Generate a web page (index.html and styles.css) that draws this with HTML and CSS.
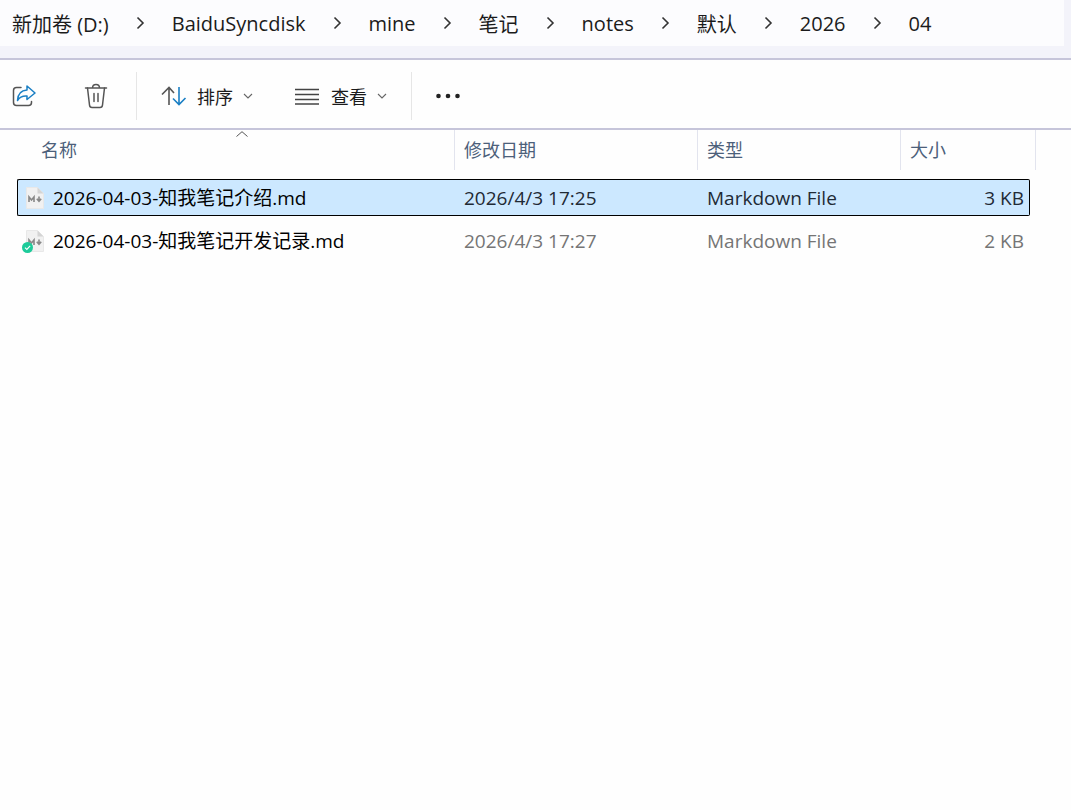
FILE: index.html
```
<!DOCTYPE html>
<html lang="zh-CN">
<head>
    <meta charset="UTF-8">
    <meta name="viewport" content="width=device-width, initial-scale=1.0">
    <title>04</title>
    <link rel="stylesheet" href="styles.css">
</head>
<body>
    <svg class="defs" aria-hidden="true">
        <symbol id="crumb-arrow" viewBox="0 0 9 14">
            <path d="M1.5 1.5 L7 7 L1.5 12.5" fill="none" stroke="#333" stroke-width="1.6"/>
        </symbol>
        <symbol id="down" viewBox="0 0 10 6">
            <path d="M1 1 L5 5 L9 1" fill="none" stroke="#666" stroke-width="1.1"/>
        </symbol>
        <symbol id="md-file" viewBox="0 0 18 22">
            <path d="M0.5 0.5 H11.5 L17.5 6.5 V21.5 H0.5 Z" fill="#f1f1f1" stroke="#e8e8e8"/>
            <path d="M11.5 0.5 V6.5 H17.5 Z" fill="#d4d4d4"/>
            <path d="M3 15 V10 L5.5 13 L8 10 V15" fill="none" stroke="#888" stroke-width="1.6"/>
            <path d="M13 9.5 V14 M10.8 11.8 L13 14.3 L15.2 11.8" fill="none" stroke="#888" stroke-width="1.6"/>
        </symbol>
    </svg>

    <header class="address">
        <nav class="crumbs" aria-label="路径">
            <a href="#">新加卷 (D:)</a>
            <svg><use href="#crumb-arrow"/></svg>
            <a href="#">BaiduSyncdisk</a>
            <svg><use href="#crumb-arrow"/></svg>
            <a href="#">mine</a>
            <svg><use href="#crumb-arrow"/></svg>
            <a href="#">笔记</a>
            <svg><use href="#crumb-arrow"/></svg>
            <a href="#">notes</a>
            <svg><use href="#crumb-arrow"/></svg>
            <a href="#">默认</a>
            <svg><use href="#crumb-arrow"/></svg>
            <a href="#">2026</a>
            <svg><use href="#crumb-arrow"/></svg>
            <a href="#">04</a>
        </nav>
    </header>

    <div class="toolbar">
        <div class="group group-file">
            <button aria-label="共享">
                <svg width="24" height="24" viewBox="0 0 24 24" fill="none" stroke-width="1.5" stroke-linejoin="round" stroke-linecap="round">
                    <path d="M9 3.5 H4.5 Q1.5 3.5 1.5 6.5 V18.5 Q1.5 21.5 4.5 21.5 H16.5 Q19.5 21.5 19.5 18.5 V17.5" stroke="#555"/>
                    <path d="M15 2 L23 9 L15 15.5 V12 Q8.5 11.5 5.5 16.5 Q6 6.5 15 6 Z" stroke="#1a7fc4"/>
                </svg>
            </button>
            <button aria-label="删除">
                <svg width="24" height="26" viewBox="0 0 24 26" fill="none" stroke="#555" stroke-width="1.5" stroke-linejoin="round" stroke-linecap="round">
                    <path d="M1.5 5 H22.5 M8.5 5 Q8.5 1.5 12 1.5 Q15.5 1.5 15.5 5"/>
                    <path d="M3.5 5 L5.5 22 Q5.7 24.5 8 24.5 H16 Q18.3 24.5 18.5 22 L20.5 5"/>
                    <path d="M10 10.5 V18.5 M14 10.5 V18.5"/>
                </svg>
            </button>
        </div>
        <div class="group group-view">
            <button>
                <svg width="26" height="20" viewBox="0 0 26 20" fill="none" stroke-width="1.6">
                    <path d="M8 19 V1.5 M1 8.5 L8 1.5 L13 7" stroke="#555"/>
                    <path d="M18 1 V18.5 M12 12.5 L18 18.5 L24.5 12" stroke="#1a7fc4"/>
                </svg>
                排序
                <svg class="down"><use href="#down"/></svg>
            </button>
            <button>
                <svg width="26" height="17" viewBox="0 0 26 17" stroke="#444" stroke-width="1.3">
                    <path d="M0 1.5 H24 M0 6.5 H24 M0 11.5 H24 M0 16 H24"/>
                </svg>
                查看
                <svg class="down"><use href="#down"/></svg>
            </button>
        </div>
        <div class="group group-more">
            <button aria-label="更多">
                <svg width="24" height="6" viewBox="0 0 24 6" fill="#222">
                    <circle cx="2.5" cy="3" r="2.3"/>
                    <circle cx="12" cy="3" r="2.3"/>
                    <circle cx="21.5" cy="3" r="2.3"/>
                </svg>
            </button>
        </div>
    </div>

    <main class="files">
        <table>
            <colgroup>
                <col>
                <col class="col-date">
                <col class="col-type">
                <col class="col-size">
                <col class="col-edge">
            </colgroup>
            <thead>
                <tr>
                    <th class="name" aria-sort="ascending">
                        名称
                        <svg class="sorted" viewBox="0 0 12 6"><path d="M0.5 5.5 L6 0.7 L11.5 5.5" fill="none" stroke="#555"/></svg>
                    </th>
                    <th>修改日期</th>
                    <th>类型</th>
                    <th colspan="2">大小</th>
                </tr>
            </thead>
            <tbody>
                <tr class="selected">
                    <td class="name">
                        <div class="file">
                            <span class="icon"><svg><use href="#md-file"/></svg></span>
                            2026-04-03-知我笔记介绍.md
                        </div>
                    </td>
                    <td>2026/4/3 17:25</td>
                    <td>Markdown File</td>
                    <td class="size">3 KB</td>
                </tr>
                <tr>
                    <td class="name">
                        <div class="file">
                            <span class="icon">
                                <svg><use href="#md-file"/></svg>
                                <svg class="synced" viewBox="0 0 10 10"><circle cx="5" cy="5" r="5" fill="#1dcb9a"/><path d="M2.7 5.2 L4.4 6.8 L7.4 3.6" fill="none" stroke="#fff"/></svg>
                            </span>
                            2026-04-03-知我笔记开发记录.md
                        </div>
                    </td>
                    <td>2026/4/3 17:27</td>
                    <td>Markdown File</td>
                    <td class="size">2 KB</td>
                </tr>
            </tbody>
        </table>
    </main>
</body>
</html>
```
FILE: styles.css
```
* {
    box-sizing: border-box;
}
body {
    margin: 0;
    background: #fefefe;
    color: #1b1b1b;
    font-family: "Open Sans", "Noto Sans CJK SC", sans-serif;
}
svg {
    display: block;
    flex: none;
}
.defs {
    display: none;
}

/* address bar */
.address {
    background: #f3f3fa;
    border-bottom: 2px solid #c6c5da;
    padding: 0 7px 12px 0;
}
.crumbs {
    display: flex;
    align-items: center;
    gap: 27px;
    height: 46px;
    padding-left: 12px;
    background: #fcfcfe;
    font-size: 20px;
    white-space: nowrap;
}
.crumbs a {
    color: inherit;
    text-decoration: none;
}
.crumbs svg {
    width: 9px;
    height: 14px;
}

/* toolbar */
.toolbar {
    display: flex;
    align-items: center;
    height: 70px;
    padding-top: 4px;
    border-bottom: 2px solid #c6c5da;
}
.group {
    display: flex;
    align-items: center;
    height: 48px;
    padding: 0 24px;
}
.group + .group {
    border-left: 1px solid #e6e6e6;
}
.group-file {
    gap: 48px;
    padding: 0 28px 0 12px;
}
.group-view {
    gap: 42px;
}
button {
    display: flex;
    align-items: center;
    gap: 10px;
    padding: 0;
    border: 0;
    background: none;
    color: #1b1b1b;
    font-family: inherit;
    font-size: 18px;
    cursor: pointer;
}
.down {
    width: 10px;
    height: 6px;
}

/* file list */
.files {
    padding: 0 35px 0 17px;
}
table {
    width: 100%;
    margin-top: -6px;
    border-spacing: 0 6px;
    table-layout: fixed;
    font-size: 19px;
    line-height: 24px;
}
.col-date {
    width: 243px;
}
.col-type {
    width: 203px;
}
.col-size {
    width: 129px;
}
.col-edge {
    width: 6px;
}
th {
    position: relative;
    height: 43px;
    padding: 0 9px 3px;
    background: linear-gradient(#e2e4ee, #e2e4ee) right top / 1px 40px no-repeat;
    color: #4c607a;
    font-size: 18px;
    font-weight: normal;
    text-align: left;
}
th.name {
    padding-left: 24px;
}
.sorted {
    position: absolute;
    top: 1px;
    left: 50%;
    width: 12px;
    height: 6px;
}
tbody td {
    height: 37px;
    padding: 0 9px;
    color: #757575;
}
tbody td.name {
    padding: 0 0 0 8px;
    border-left: 1px solid transparent;
    color: #000;
}
tbody td.size {
    padding-right: 5px;
    border-right: 1px solid transparent;
    text-align: right;
}
.selected td,
.selected td.name,
.selected td.size {
    border-color: #000;
}
.selected td {
    border-top: 1px solid #000;
    border-bottom: 1px solid #000;
    background: #cce8ff;
    color: #1f2a35;
}
.selected td.name {
    border-radius: 2px 0 0 2px;
}
.selected td.size {
    border-radius: 0 2px 2px 0;
}
.file {
    display: flex;
    align-items: center;
    gap: 9px;
    white-space: nowrap;
}
.icon {
    position: relative;
}
.icon svg {
    width: 18px;
    height: 22px;
}
.icon .synced {
    position: absolute;
    left: -4px;
    bottom: -1px;
    width: 11px;
    height: 11px;
}
```
